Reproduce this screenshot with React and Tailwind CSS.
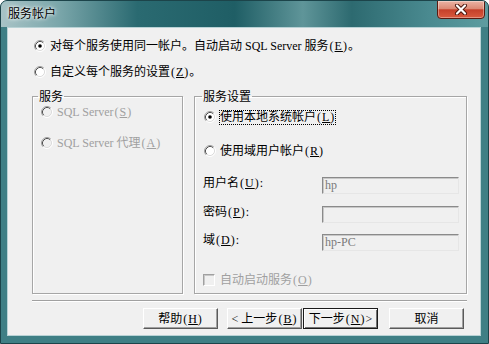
import React from "react";

const Radio = ({ checked, disabled }) => (
  <svg width="12" height="12" viewBox="0 0 12 12" className="shrink-0">
    <circle cx="6" cy="6" r="4.5" fill={disabled ? "#f0f0f0" : "#ffffff"} />
    <path d="M9.89 2.11A5.5 5.5 0 0 0 2.11 9.89" fill="none" stroke="#a0a0a0" strokeWidth="1" />
    <path d="M9.18 2.82A4.5 4.5 0 0 0 2.82 9.18" fill="none" stroke="#505050" strokeWidth="1" />
    <path d="M2.11 9.89A5.5 5.5 0 0 0 9.89 2.11" fill="none" stroke="#ffffff" strokeWidth="1" />
    <path d="M2.82 9.18A4.5 4.5 0 0 0 9.18 2.82" fill="none" stroke="#dcdcdc" strokeWidth="1" />
    {checked && <circle cx="6" cy="6" r="1.8" fill="#000" />}
  </svg>
);

// mnemonic key, e.g. (E)
const M = ({ k }) => (
  <span className="pl-[1px] tracking-[1px]">
    (<u>{k}</u>)
  </span>
);

const Field = ({ label, value, first }) => (
  <div className={`flex items-start ${first}`}>
    <span className="w-[127px] pl-[8px] leading-[12px]">{label}</span>
    <div className="w-[137px] h-[17px] border border-t-[#8a8a8a] border-l-[#8a8a8a] border-b-[#e6e6e6] border-r-[#e6e6e6] bg-[#f0f0f0] shadow-[inset_1px_1px_0_#c8c8c8] pl-[2px] text-[#7a7a7a] leading-[15px]">
      {value}
    </div>
  </div>
);

const Btn = ({ children, def }) => (
  <button
    className={`w-[75px] h-[21px] flex items-center justify-center bg-[#f0f0f0] text-[12px] leading-[14px] ${
      def
        ? "border border-[#1a1a1a] shadow-[inset_1px_1px_0_#fff,inset_-1px_-1px_0_#707070]"
        : "border border-t-white border-l-white border-b-[#5a5a5a] border-r-[#5a5a5a] shadow-[inset_-1px_-1px_0_#a0a0a0]"
    }`}
  >
    {children}
  </button>
);

export default function App() {
  return (
    <div className="w-[489px] h-[344px] flex flex-col border border-[#1c444a] rounded-t-[7px] bg-[#3f7f85] font-['Liberation_Serif','Noto_Sans_CJK_SC',serif] text-black overflow-hidden">
      {/* title bar */}
      <div className="h-[26px] flex items-start justify-between pl-[7px] pr-[3px] bg-[linear-gradient(90deg,#a8c3c6_0%,#7aa6aa_12%,#2a6a71_28%,#1f5e65_48%,#5f9599_62%,#2d6a70_72%,#4a8a90_88%,#5e9ca0_100%)]">
        <span className="mt-[5px] text-[12px] leading-[14px] font-['Noto_Sans_CJK_SC',sans-serif] [text-shadow:0_0_5px_#fff,0_0_3px_#fff]">
          服务帐户
        </span>
        <div className="w-[48px] h-[19px] -mt-[1px] rounded-b-[4px] border border-[#5a1a10] bg-[linear-gradient(180deg,#ebb4a5_0%,#dc8a75_45%,#c5402a_52%,#d95a3e_100%)] shadow-[inset_0_0_0_1px_rgba(255,255,255,0.35)] flex items-center justify-center">
          <svg width="14" height="11" viewBox="0 0 14 11">
            <path d="M3 1.5L11 9.5M11 1.5L3 9.5" stroke="#4a140a" strokeWidth="4" strokeLinecap="round" />
            <path d="M3 1.5L11 9.5M11 1.5L3 9.5" stroke="#ffffff" strokeWidth="2.2" strokeLinecap="round" />
          </svg>
        </div>
      </div>

      {/* client area */}
      <div className="ml-[6px] mr-[7px] h-[309px] border border-[#b8d2d5] bg-[#f0f0f0]">
        <div className="pl-[24px] pr-[13px] pt-[11px] text-[12px] leading-[14px]">
          <div className="flex items-center h-[14px] pl-[2px] gap-[4px]">
            <Radio checked />
            <span>
              对每个服务使用同一帐户。自动启动 SQL Server 服务<M k="E" />。
            </span>
          </div>
          <div className="flex items-center h-[14px] pl-[2px] gap-[4px] mt-[12px]">
            <Radio />
            <span>
              自定义每个服务的设置<M k="Z" />。
            </span>
          </div>

          {/* groups */}
          <div className="flex gap-[11px] mt-[10px]">
            <fieldset className="w-[151px] h-[205px] border border-[#a6a6a6] shadow-[inset_1px_1px_0_#fff,1px_1px_0_#fff]">
              <legend className="ml-[5px] px-[1px] leading-[14px] font-['Noto_Sans_CJK_SC',sans-serif]">服务</legend>
              <div className="text-[#a0a0a0]">
                <div className="flex items-center h-[14px] pl-[8px] gap-[4px] mt-[2px]">
                  <Radio disabled />
                  <span>
                    SQL Server<M k="S" />
                  </span>
                </div>
                <div className="flex items-center h-[14px] pl-[8px] gap-[4px] mt-[17px]">
                  <Radio disabled />
                  <span>
                    SQL Server 代理<M k="A" />
                  </span>
                </div>
              </div>
            </fieldset>

            <fieldset className="flex-1 h-[205px] border border-[#a6a6a6] shadow-[inset_1px_1px_0_#fff,1px_1px_0_#fff]">
              <legend className="ml-[7px] px-[1px] leading-[14px] font-['Noto_Sans_CJK_SC',sans-serif]">服务设置</legend>
              <div className="flex items-center h-[16px] pl-[9px] gap-[3px] mt-[6px]">
                <Radio checked />
                <span className="border border-dotted border-black leading-[13px]">
                  使用本地系统帐户<M k="L" />
                </span>
              </div>
              <div className="flex items-center h-[16px] pl-[9px] gap-[4px] mt-[18px]">
                <Radio />
                <span>
                  使用域用户帐户<M k="R" />
                </span>
              </div>
              <Field first="mt-[18px]" label={<>用户名<M k="U" />:</>} value="hp" />
              <Field first="mt-[12px]" label={<>密码<M k="P" />:</>} value="" />
              <Field first="mt-[11px]" label={<>域<M k="D" />:</>} value="hp-PC" />
              <div className="flex items-center h-[14px] pl-[8px] gap-[5px] mt-[22px] text-[#a0a0a0]">
                <div className="w-[12px] h-[12px] border border-t-[#a0a0a0] border-l-[#a0a0a0] border-b-white border-r-white bg-[#f0f0f0] shadow-[inset_1px_1px_0_#c8c8c8]" />
                <span>
                  自动启动服务<M k="O" />
                </span>
              </div>
            </fieldset>
          </div>

          <div className="mt-[6px] h-[2px] border-t border-t-[#a0a0a0] border-b border-b-white" />

          <div className="mt-[6px] flex justify-end pr-[2px]">
            <Btn>
              帮助<M k="H" />
            </Btn>
            <div className="w-[9px]" />
            <Btn>
              &lt; 上一步<M k="B" />
            </Btn>
            <div className="w-[1px]" />
            <Btn def>
              下一步<M k="N" /> &gt;
            </Btn>
            <div className="w-[11px]" />
            <div className="w-[76px] flex">
              <Btn>取消</Btn>
            </div>
          </div>
        </div>
      </div>
    </div>
  );
}
